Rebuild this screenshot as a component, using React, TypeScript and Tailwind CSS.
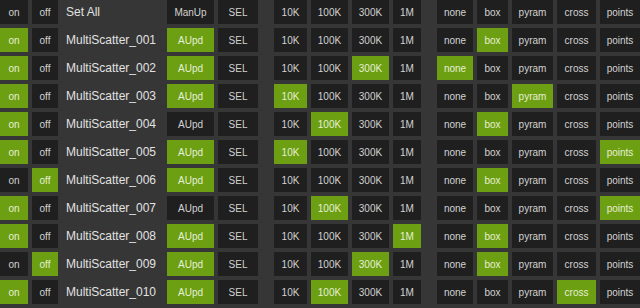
import React from 'react';

type Row = {
  name: string;
  on: boolean;
  upd: boolean;
  size: number; // -1 none selected
  shape: number; // -1 none selected
};

const rows: Row[] = [
  { name: 'MultiScatter_001', on: true, upd: true, size: -1, shape: 1 },
  { name: 'MultiScatter_002', on: true, upd: true, size: 2, shape: 0 },
  { name: 'MultiScatter_003', on: true, upd: true, size: 0, shape: 2 },
  { name: 'MultiScatter_004', on: true, upd: false, size: 1, shape: 1 },
  { name: 'MultiScatter_005', on: true, upd: true, size: 0, shape: 4 },
  { name: 'MultiScatter_006', on: false, upd: true, size: -1, shape: 1 },
  { name: 'MultiScatter_007', on: true, upd: false, size: 1, shape: 4 },
  { name: 'MultiScatter_008', on: true, upd: true, size: 3, shape: 1 },
  { name: 'MultiScatter_009', on: false, upd: true, size: 2, shape: 1 },
  { name: 'MultiScatter_010', on: true, upd: true, size: 1, shape: 3 },
];

const sizes = [
  { label: '10K', w: 'w-[33px]' },
  { label: '100K', w: 'w-[37px]' },
  { label: '300K', w: 'w-[37px]' },
  { label: '1M', w: 'w-[28px]' },
];

const shapes = [
  { label: 'none', w: 'w-[36px]' },
  { label: 'box', w: 'w-[31px]' },
  { label: 'pyram', w: 'w-[41px]' },
  { label: 'cross', w: 'w-[39px]' },
  { label: 'points', w: 'w-[40px]' },
];

function Btn({ label, active, w }: { label: string; active?: boolean; w: string }) {
  return (
    <div
      className={`${w} h-full shrink-0 flex items-center justify-center text-[10px] ${
        active ? 'bg-[#6c9f12] text-[#e6efd6]' : 'bg-[#1f1f1f] text-[#d2d2d2]'
      }`}
    >
      {label}
    </div>
  );
}

function Line({ row, header }: { row?: Row; header?: boolean }) {
  return (
    <div className="flex h-6 items-stretch">
      <div className="flex gap-1">
        <Btn label="on" w="w-[28px]" active={row?.on} />
        <Btn label="off" w="w-[26px]" active={row ? !row.on : false} />
      </div>
      <div className="w-[109px] shrink-0 flex items-center pl-2 text-[12px] text-[#e2e2e2]">
        {header ? 'Set All' : row?.name}
      </div>
      <div className="flex gap-1">
        <Btn label={header ? 'ManUp' : 'AUpd'} w="w-[47px]" active={row?.upd} />
        <Btn label="SEL" w="w-[40px]" />
      </div>
      <div className="flex gap-1 ml-4">
        {sizes.map((s, i) => (
          <Btn key={s.label} label={s.label} w={s.w} active={row?.size === i} />
        ))}
      </div>
      <div className="flex gap-1 ml-4">
        {shapes.map((s, i) => (
          <Btn key={s.label} label={s.label} w={s.w} active={row?.shape === i} />
        ))}
      </div>
    </div>
  );
}

export default function App() {
  return (
    <div
      className="w-[640px] h-[308px] bg-[#363636] flex flex-col gap-1 overflow-hidden"
      style={{ fontFamily: '"Liberation Sans", Arial, sans-serif' }}
    >
      <Line header />
      {rows.map((r) => (
        <Line key={r.name} row={r} />
      ))}
    </div>
  );
}
